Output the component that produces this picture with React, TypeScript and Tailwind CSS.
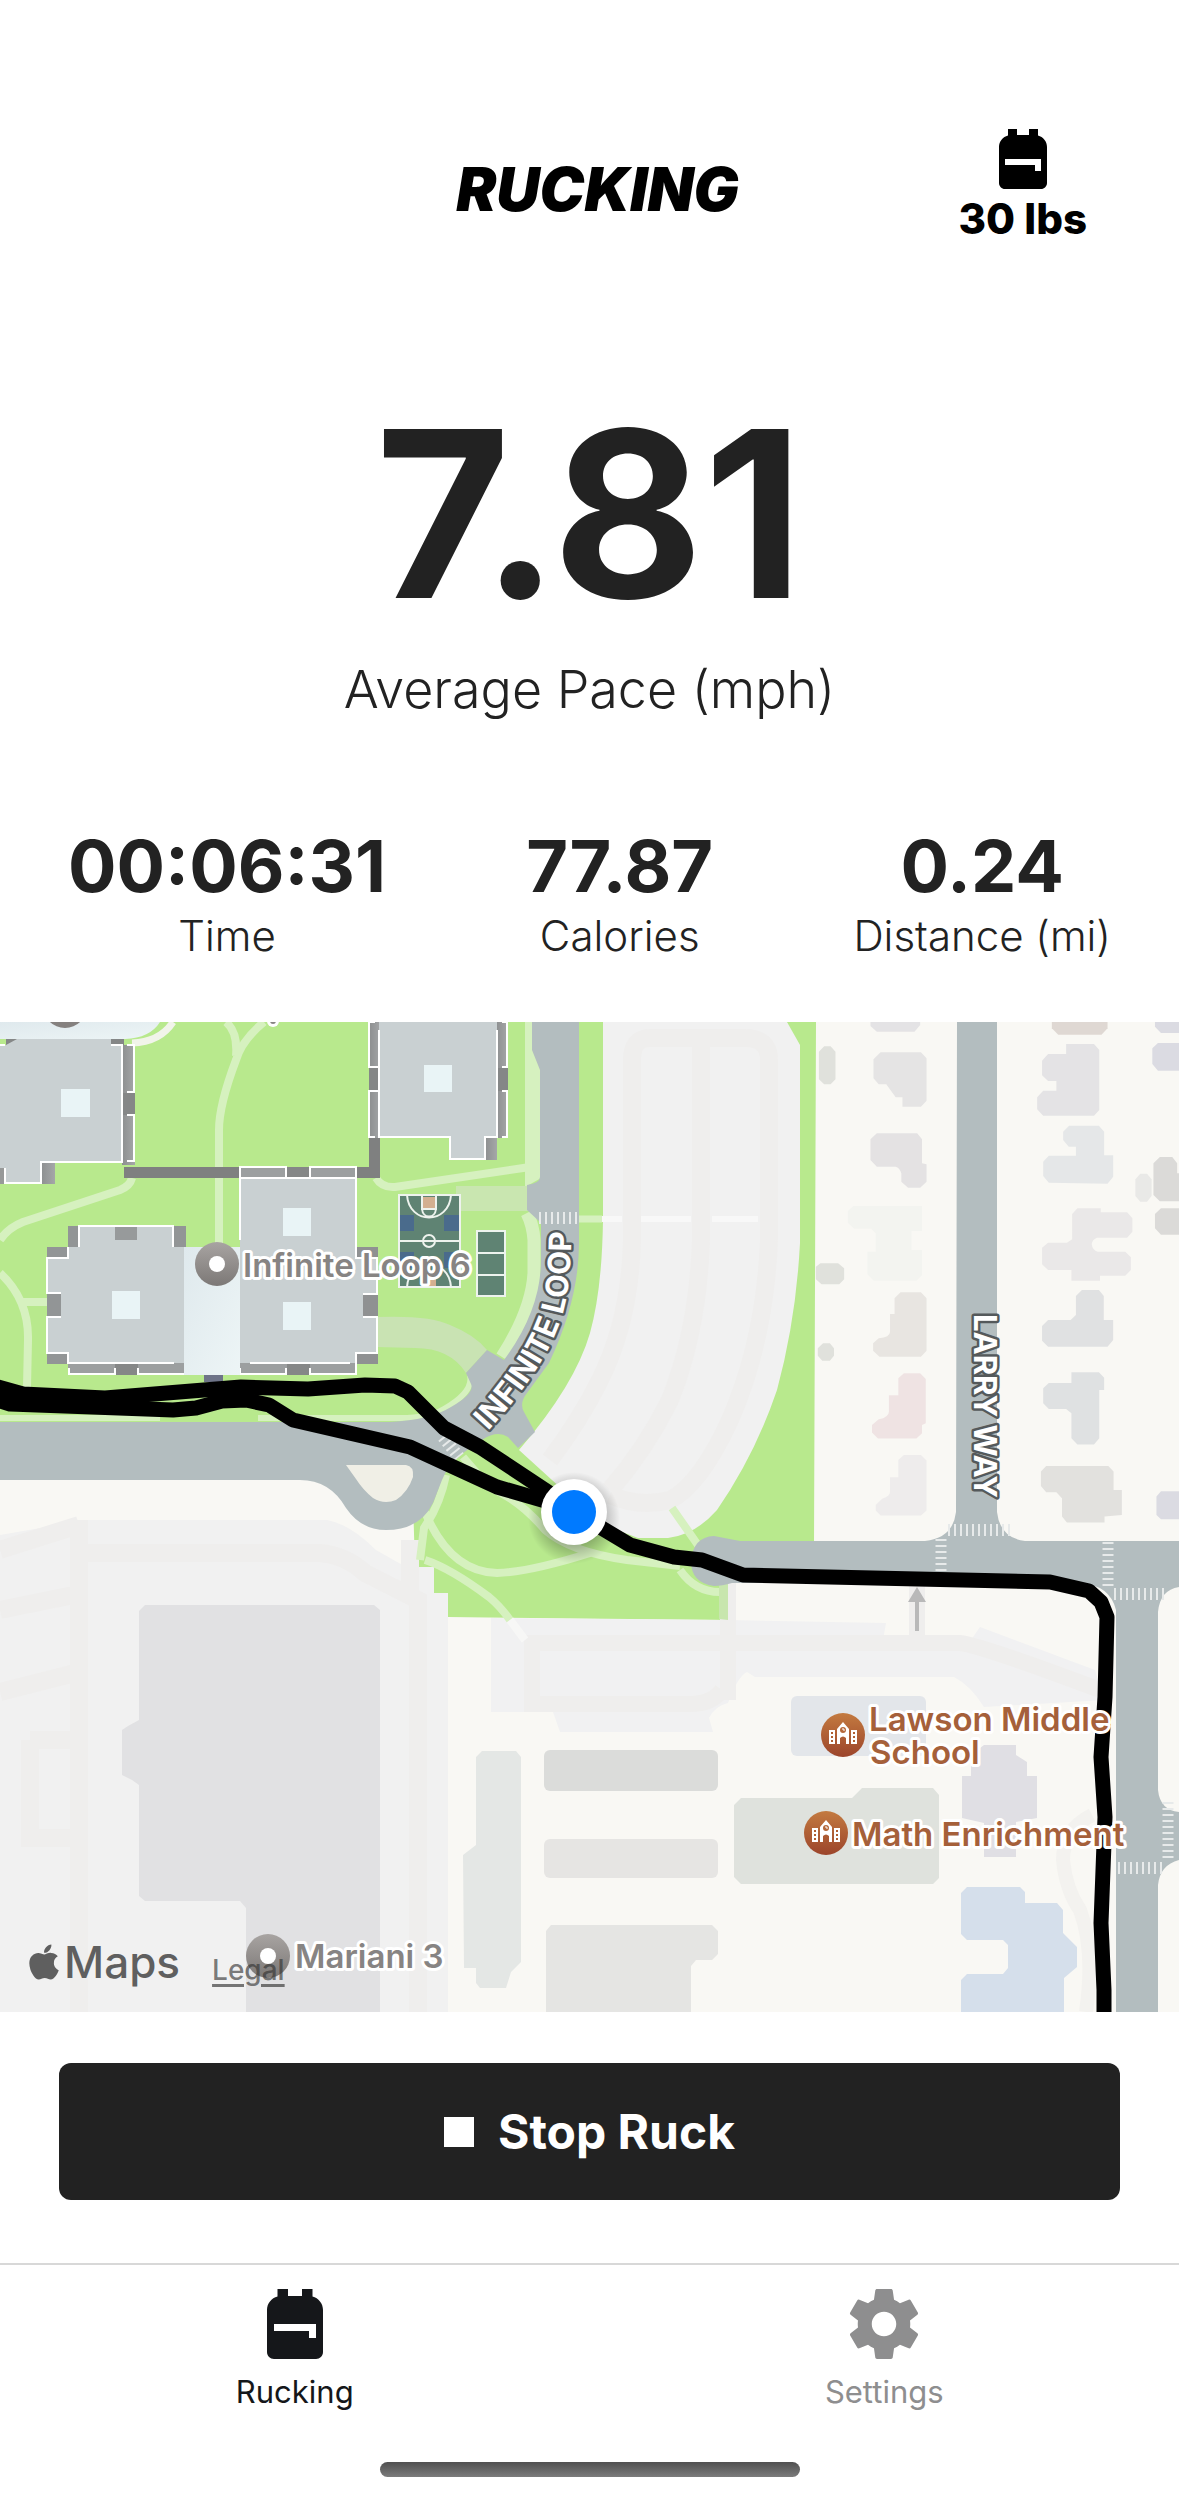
import React from "react";
import { MdBackpack } from "react-icons/md";
import { FaApple } from "react-icons/fa";

const stats = [
  { value: "00:06:31", label: "Time" },
  { value: "77.87", label: "Calories" },
  { value: "0.24", label: "Distance (mi)" },
];

function GearIcon({ className }: { className?: string }) {
  return (
    <svg viewBox="0 0 24 24" fill="currentColor" className={className} aria-hidden="true">
      <path d="M19.43 12.98c.04-.32.07-.64.07-.98s-.03-.66-.07-.98l2.11-1.65c.19-.15.24-.42.12-.64l-2-3.46c-.12-.22-.39-.3-.61-.22l-2.49 1c-.52-.4-1.08-.73-1.69-.98l-.38-2.65C14.46 2.18 14.25 2 14 2h-4c-.25 0-.46.18-.49.42l-.38 2.65c-.61.25-1.17.59-1.69.98l-2.49-1c-.23-.09-.49 0-.61.22l-2 3.46c-.13.22-.07.49.12.64l2.11 1.65c-.04.32-.07.65-.07.98s.03.66.07.98l-2.11 1.65c-.19.15-.24.42-.12.64l2 3.46c.12.22.39.3.61.22l2.49-1c.52.4 1.08.73 1.69.98l.38 2.65c.03.24.24.42.49.42h4c.25 0 .46-.18.49-.42l.38-2.65c.61-.25 1.17-.59 1.69-.98l2.49 1c.23.09.49 0 .61-.22l2-3.46c.12-.22.07-.49-.12-.64l-2.11-1.65zM12 15.5c-1.93 0-3.5-1.57-3.5-3.5s1.57-3.5 3.5-3.5 3.5 1.57 3.5 3.5-1.57 3.5-3.5 3.5z" />
    </svg>
  );
}

function Campus() {
  return (
    <g>
      {/* walking paths */}
      <g fill="none" stroke="#d6f1bf" strokeWidth="8">
        <path d="M226 1022Q238 1032 236 1056M264 1022Q242 1040 236 1060Q219 1105 219 1130V1250" />
        <path d="M132 1178Q130 1186 120 1190L23 1222Q8 1228 0 1240" />
        <path d="M0 1273Q29 1300 28 1340L27 1387M23 1302H50" />
        <path d="M376 1178Q382 1188 395 1187L530 1167" />
        <path d="M470 1375Q474 1392 444 1409Q430 1418 400 1418H258M160 1418H0" strokeWidth="6" />
        <path d="M425 1512Q450 1572 497 1573Q530 1572 590 1553" />
        <path d="M425 1560Q450 1568 489 1597Q500 1606 510 1620" />
        <path d="M463 1457L489 1487Q520 1500 545 1530Q570 1552 627 1560L680 1566" />
        <path d="M446 1475Q440 1505 424 1528L420 1560" />
        <path d="M672 1508L700 1548M680 1570Q695 1592 720 1592" />
      </g>
      <path d="M510 1620L525 1640" fill="none" stroke="#f7f7f6" strokeWidth="8" />
      <path d="M525 1022H534V1052L541 1070V1178L527 1186H525Z" fill="#d6f1bf" />
      <path d="M527 1213Q533 1225 534 1240V1273Q532 1310 502 1357" fill="none" stroke="#d6f1bf" strokeWidth="13" />
      <rect x="456" y="1186" width="72" height="25" fill="#c9e6b0" />
      <path d="M377 1317Q430 1315 450 1325Q475 1335 487 1350L466 1373Q450 1348 415 1348L377 1347Z" fill="#c9e3b3" />
      <path d="M719 1583H728V1620L719 1619Z" fill="#c8e6ae" />

      {/* covered walkways */}
      <path d="M124 1167H369V1138H380V1178H124Z" fill="#7f8080" />

      {/* north hall and its glass roof */}
      <path d="M173 1022Q160 1042 132 1043" fill="none" stroke="#f1f4ea" strokeWidth="7" />
      <path d="M0 1022H160Q150 1038 125 1039H0Z" fill="url(#glass)" />
      <circle cx="65" cy="1006" r="22" fill="#85817f" />
      <rect x="6" y="1039" width="11" height="6" fill="#858787" />
      <rect x="111" y="1039" width="13" height="7" fill="#858787" />
      <rect x="122" y="1045" width="13" height="120" fill="url(#shade)" />
      <rect x="122" y="1093" width="13" height="22" fill="#858787" />
      <rect x="41" y="1162" width="14" height="22" fill="url(#shade)" />
      <rect x="0" y="1168" width="6" height="16" fill="#979999" />
      <path d="M0 1045H6L17 1039H111V1045H122V1162H41V1183H5V1168H0Z" fill="#c9d0d2" />
      <path d="M0 1045H5M111 1045H122V1162H41V1183H5V1168M127 1045H134V1092H127M127 1115H134V1161H127" fill="none" stroke="#fff" strokeWidth="2" />
      <rect x="61" y="1089" width="29" height="28" fill="#e9f4f6" />

      {/* east hall */}
      <rect x="369" y="1022" width="12" height="116" fill="url(#shade)" />
      <rect x="369" y="1068" width="12" height="23" fill="#858787" />
      <rect x="496" y="1022" width="12" height="116" fill="url(#shade)" />
      <rect x="496" y="1068" width="12" height="23" fill="#858787" />
      <rect x="485" y="1138" width="12" height="22" fill="url(#shade)" />
      <path d="M379 1022H497V1137H485V1159H450V1137H379Z" fill="#c9d0d2" />
      <path d="M379 1030V1137H450V1159H485V1137H497V1030M375 1022H369V1067H378M378 1091H369V1137H375M502 1022H507V1067H502M502 1091H507V1137H502" fill="none" stroke="#fff" strokeWidth="2" />
      <rect x="424" y="1065" width="28" height="27" fill="#e9f4f6" />

      {/* centre hall */}
      <rect x="240" y="1167" width="116" height="12" fill="#9c9fa0" />
      <rect x="287" y="1167" width="23" height="12" fill="#858787" />
      <rect x="240" y="1363" width="116" height="12" fill="#9c9fa0" />
      <rect x="287" y="1363" width="23" height="12" fill="#858787" />
      <rect x="356" y="1247" width="22" height="117" fill="#8f9192" />
      <path d="M240 1178H356V1258H377V1294H363V1316H377V1353H356V1363H240Z" fill="#c9d0d2" />
      <path d="M240 1240V1178H356V1258H377V1294H363M363 1317H377V1353H356V1374H310V1368M240 1368V1374H286V1368M240 1178V1167H286V1177M310 1177V1167H356V1178M250 1363H350" fill="none" stroke="#fff" strokeWidth="2" />
      <rect x="283" y="1208" width="28" height="28" fill="#e9f4f6" />
      <rect x="283" y="1302" width="28" height="28" fill="#e9f4f6" />

      {/* west hall */}
      <rect x="68" y="1226" width="118" height="22" fill="#929596" />
      <rect x="47" y="1247" width="22" height="117" fill="#929596" />
      <rect x="68" y="1363" width="116" height="12" fill="#9c9fa0" />
      <rect x="115" y="1363" width="23" height="12" fill="#858787" />
      <path d="M79 1226H173V1247H184V1363H68V1353H47V1317H61V1293H47V1258H68V1247H79Z" fill="#c9d0d2" />
      <rect x="115" y="1226" width="22" height="14" fill="#979a9b" />
      <path d="M79 1247V1226H173V1247M68 1247V1258H47V1293H61M61 1317H47V1353H68V1363H174M69 1368V1374H115V1368M138 1368V1374H184" fill="none" stroke="#fff" strokeWidth="2" />
      <rect x="112" y="1291" width="28" height="28" fill="#e9f4f6" />
      <rect x="184" y="1247" width="56" height="128" fill="url(#glass)" />
      <rect x="204" y="1375" width="19" height="7" fill="#6e7488" />

      {/* sports courts */}
      <rect x="399" y="1195" width="61" height="92" fill="#5f8373" />
      <path d="M400 1215h14v16h-14zM444 1215h15v16h-15zM400 1252h14v16h-14zM444 1252h15v16h-15z" fill="#4a6b8c" />
      <path d="M422 1197h14v12h-14zM422 1276h14v10h-14z" fill="#d3af90" />
      <g fill="none" stroke="#eef3ee" strokeWidth="2">
        <rect x="399" y="1195" width="61" height="92" />
        <path d="M399 1241H460M407 1195C409 1225 449 1225 451 1195M407 1287C409 1257 449 1257 451 1287M422 1195V1209H436V1195M422 1209C423 1219 435 1219 436 1209" />
        <circle cx="429" cy="1241" r="6" />
      </g>
      <rect x="477" y="1231" width="28" height="65" fill="#5f8373" stroke="#eef3ee" strokeWidth="2" />
      <path d="M477 1253H505M477 1275H505" stroke="#eef3ee" strokeWidth="2" />
    </g>
  );
}

function Parking() {
  return (
    <g>
      <path d="M603 1022H787L800 1045V1243Q796 1320 777 1390Q755 1455 717 1510Q695 1535 668 1538H638Q600 1525 574 1500L519 1450Q575 1385 590 1333Q602 1290 603 1220Z" fill="#f1f1f1" />
      <g fill="none" stroke="#efeeed" strokeWidth="18">
        <path d="M769 1240V1060Q769 1038 745 1038H650Q632 1038 632 1060V1240Q630 1320 600 1380Q580 1420 550 1460" />
        <path d="M701 1036V1240Q698 1330 670 1400Q645 1450 610 1490" />
        <path d="M769 1240Q765 1340 730 1420Q700 1485 670 1500Q640 1508 610 1495" />
      </g>
      <path d="M579 1219H622M641 1219H691M712 1219H758" stroke="#f8f8f8" strokeWidth="6" />
      <path d="M579 1219H602" stroke="#d6f1bf" strokeWidth="7" />

      {/* south-west lot */}
      <path d="M0 1535L87 1520H327Q350 1524 376 1550L406 1567H434V1593H448V2012H0Z" fill="#f1f1f1" />
      <g fill="none" stroke="#efeeed" strokeWidth="18">
        <path d="M79 1520V2012M0 1550L79 1525M0 1610L79 1594M0 1692L79 1672M88 1553H320Q345 1555 365 1573L418 1600V2012M410 1540V1600" />
        <path d="M30 1740H70M30 1740V1838H70" />
      </g>
      <path d="M145 1605H374L380 1610V2012H246V1908L240 1901H145L139 1896V1785L132 1780L122 1775V1730L128 1726L139 1720V1611Z" fill="#e1e1e3" />

      {/* school lot */}
      <path d="M491 1618L728 1620L886 1623L883 1640H971L980 1627L1095 1670L1104 1700L984 1707Q970 1685 954 1677H755L747 1672Q738 1676 728 1703Q715 1706 709 1718L713 1732H560L553 1712H491Z" fill="#f1f1f2" />
      <path d="M728 1583V1700M917 1585V1640M532 1712V1643H960Q980 1645 1100 1690M532 1704H690Q712 1704 722 1690" fill="none" stroke="#efeeed" strokeWidth="16" />
      <path d="M1092 1815Q1063 1830 1063 1860Q1066 1890 1080 1910Q1095 1950 1086 2012" fill="none" stroke="#f3f2ef" strokeWidth="14" />
      <path d="M915 1631V1602H908L917 1587L926 1602H919V1631Z" fill="#b9b9b9" />
    </g>
  );
}

function Roads() {
  return (
    <g>
      <g fill="#b3bdbf">
        <path d="M532 1022H579V1243Q579 1300 549 1363L527 1393Q519 1403 524 1412L535 1432L518 1448L508 1437Q497 1430 482 1440L463 1453Q448 1465 442 1480L433 1503Q420 1530 386 1530Q361 1530 346 1508Q330 1480 300 1480H0V1422H390Q430 1420 451 1407Q475 1393 471 1384L466 1373L487 1350L504 1360Q541 1310 541 1260V1223L527 1210V1185Q540 1183 540 1177V1070L532 1050Z" />
        <path d="M957 1022H997V1512Q1000 1538 1025 1541H1179V1587Q1160 1590 1158 1612V1790Q1160 1810 1179 1812V1860Q1160 1865 1158 1885V2012H1116V1610Q1110 1585 1080 1583L732 1583Q722 1586 714 1586Q691 1583 691 1561Q693 1537 714 1536L740 1541H925Q953 1538 956 1512Z" />
      </g>
      <path d="M346 1465H406Q414 1466 413 1477Q408 1492 396 1500Q384 1505 373 1498Q363 1490 356 1479Z" fill="#f0efe6" />
      <g fill="none" stroke="#e7eaea" strokeDasharray="2 4">
        <path d="M539 1218H578" strokeWidth="12" />
        <path d="M443 1437L459 1457" strokeWidth="12" />
        <path d="M948 1530H1012" strokeWidth="12" />
        <path d="M941 1539V1572" strokeWidth="11" />
        <path d="M1108 1542V1590" strokeWidth="11" />
        <path d="M1114 1594H1168" strokeWidth="12" />
        <path d="M1118 1868H1162" strokeWidth="12" />
        <path d="M1168 1802V1862" strokeWidth="11" />
      </g>
    </g>
  );
}

function Houses() {
  return (
    <g>
      {/* drawn on a finer grid than the rest of the map */}
      <g transform="translate(589 1010) scale(0.3763 0.3333)">
        <path d="M748 35H880V45L865 65H765L748 48Z" fill="#e4e3e5" />
        <path d="M611 125L625 109H642L655 125V208L642 223H625L611 208ZM603 770L615 760H662L678 775V808L665 823H618L603 808ZM608 1015L622 1000H640L651 1015V1037L640 1052H620L608 1037Z" fill="#e0e1dc" />
        <path d="M756 148L775 127H882L897 145V272L882 290H833V262H815L790 223H770L756 205Z" fill="#e5e4e4" />
        <path d="M748 388L765 370H872L885 388V460L897 463V515L880 533H848L830 515V490Q825 472 815 470H765L748 450Z" fill="#e4e2e3" />
        <path d="M688 603L703 588H885V663H857V720H885V795L870 812H757L740 793V725H762V670L750 656H705L688 638Z" fill="#f3f4f0" />
        <path d="M812 865L828 847H882L897 865V1022L882 1040H772L755 1022V1000L770 985Q800 982 800 965V912H812Z" fill="#e8e5e1" />
        <path d="M822 1105L837 1090H880L895 1107V1240L885 1245V1270L870 1286H768L752 1268V1245L770 1228Q797 1222 797 1205V1156H822Z" fill="#efe3e3" />
        <path d="M822 1350L837 1335H882L897 1352V1502L882 1517H775L762 1502V1485L780 1466Q800 1460 800 1445V1402H822Z" fill="#eeecec" />
        <path d="M1230 35H1378V55L1362 74H1247L1230 55Z" fill="#dfd8d3" />
        <path d="M1268 102H1342L1356 120V300L1342 317H1207L1191 298V262L1207 242H1242V213H1220L1204 196V152L1220 132H1268Z" fill="#e4e3e5" />
        <path d="M1260 365L1276 347H1355L1369 365V436H1393V500L1378 521L1222 518L1207 498V455L1222 437H1294V410H1275L1260 390Z" fill="#e5e7e8" />
        <path d="M1284 612L1298 595H1360V607H1430L1444 625V665L1430 683H1350Q1336 690 1336 703Q1338 722 1352 725H1425L1440 742V780L1425 797H1358V812H1282V780H1220L1204 763V713L1220 698H1270L1284 688Z" fill="#eae8e8" />
        <path d="M1294 858L1310 840H1355L1368 858V930H1393V990L1378 1010H1220L1204 992V948L1220 930H1280L1294 915Z" fill="#e0e1e2" />
        <path d="M1282 1087H1355L1369 1103V1140H1356V1285L1342 1304H1298L1282 1285V1210L1268 1197H1222L1207 1180V1135L1222 1119H1282Z" fill="#dfe1e2" />
        <path d="M1201 1385L1215 1368H1380L1394 1385V1440H1416V1515L1370 1520V1538H1270L1257 1520V1465L1242 1447H1215L1201 1428Z" fill="#e2e1de" />
        <path d="M1504 35H1568V69H1520L1504 50ZM1497 115L1512 99H1568V182H1512L1497 162ZM1508 1460L1520 1444H1568V1528H1520L1508 1515Z" fill="#dbdbe2" />
        <path d="M1500 460L1517 441H1550L1563 460V490H1568V574H1517L1500 555ZM1504 612L1520 595H1568V674H1520L1504 655Z" fill="#dbdad8" />
        <path d="M1452 508L1465 491H1483L1495 508V558L1483 575H1465L1452 558Z" fill="#e9e9e7" />
      </g>
      {/* school buildings */}
      <path d="M482 1751H516L521 1757V1962L511 1972L506 1988H480L476 1983V1968H464L463 1855L476 1845V1757Z" fill="#e4e7e5" />
      <rect x="544" y="1750" width="174" height="41" rx="6" fill="#dbdcda" />
      <rect x="544" y="1839" width="174" height="39" rx="6" fill="#e6e5e3" />
      <path d="M551 1925H712L718 1931V1954L712 1960H696L691 1966V2012H546V1931Z" fill="#e5e5e3" />
      <rect x="791" y="1696" width="135" height="60" rx="6" fill="#e3e6ea" />
      <path d="M741 1798H852L862 1788H933L939 1795V1878L933 1884H741L734 1877V1805Z" fill="#dfe2dd" />
      <path d="M984 1745H1016V1755L1027 1762V1776H1037V1818L1016 1822V1857H984V1823L962 1818V1776H971V1755Z" fill="#e0dfe4" />
      <path d="M967 1887H1020L1025 1892V1903H1057L1063 1910V1933L1077 1947V1967L1064 1978V2012H961V1980L967 1974H1003L1008 1968V1945L1003 1940H967L961 1934V1893Z" fill="#d5dfeb" />
    </g>
  );
}

function SchoolPin({ x, y }: { x: number; y: number }) {
  return (
    <g transform={`translate(${x} ${y})`}>
      <circle r="22" fill="url(#school)" />
      <path d="M-14 -5H-8V9H-14ZM8 -5H14V9H8ZM-6 9V-6L0 -13L6 -6V9H3V3Q0 0 -3 3V9Z" fill="#fff" />
      <circle cx="0" cy="-5" r="3" fill="#b5683a" />
      <path d="M-12 -3h2v2h-2zM-12 1h2v2h-2zM-12 5h2v2h-2zM10 -3h2v2h-2zM10 1h2v2h-2zM10 5h2v2h-2z" fill="#b05f32" />
      <path d="M0 -7V-5H2" fill="none" stroke="#fff" />
    </g>
  );
}

function RouteMap() {
  return (
    <svg viewBox="0 1022 1179 990" className="block h-auto w-full" role="img" aria-label="Map of the current ruck">
      <defs>
        <linearGradient id="glass" x1="0" y1="0" x2="1" y2="1">
          <stop offset="0" stopColor="#dfe9ed" />
          <stop offset="1" stopColor="#edf5f6" />
        </linearGradient>
        <linearGradient id="shade" x1="0" y1="0" x2="1" y2="0">
          <stop offset="0" stopColor="#8d8f90" />
          <stop offset="1" stopColor="#a5a7a8" />
        </linearGradient>
        <linearGradient id="pin" x1="0" y1="0" x2="0" y2="1">
          <stop offset="0" stopColor="#a8a4a2" />
          <stop offset="1" stopColor="#7c7876" />
        </linearGradient>
        <linearGradient id="school" x1="0" y1="0" x2="0" y2="1">
          <stop offset="0" stopColor="#c37a40" />
          <stop offset="1" stopColor="#9c452b" />
        </linearGradient>
        <radialGradient id="halo">
          <stop offset="0.6" stopColor="#000" stopOpacity="0.25" />
          <stop offset="1" stopColor="#000" stopOpacity="0" />
        </radialGradient>
      </defs>

      <rect x="0" y="1022" width="1179" height="990" fill="#f9f8f4" />
      <path d="M0 1022H816L814 1545H728V1620L448 1617V1593H434V1567H415L413 1500L440 1440H0Z" fill="#b8e98d" />
      <Parking />
      <Campus />
      <Roads />
      <Houses />

      <g fill="none" stroke="#000" strokeWidth="15" strokeLinejoin="round">
        <path d="M-6 1386L23 1394L105 1398L241 1387L308 1389L365 1385L395 1386L408 1392L444 1428L480 1447L545 1490L574 1510L600 1527L630 1545L674 1557L702 1560L743 1575L1050 1582L1089 1591L1101 1602L1107 1617L1105 1697L1101 1757L1105 1817L1101 1923L1104 1990V2020" />
        <path d="M-6 1399L10 1404L173 1410L196 1408L222 1401L246 1400L269 1405L293 1420L410 1447L497 1487L549 1502L574 1512" />
        <path d="M0 1393L30 1400H140" />
      </g>

      <circle cx="574" cy="1518" r="46" fill="url(#halo)" />
      <circle cx="574" cy="1512" r="33" fill="#fff" />
      <circle cx="574" cy="1512" r="22" fill="#007aff" />

      <circle cx="217" cy="1264" r="22" fill="url(#pin)" />
      <circle cx="217" cy="1264" r="8" fill="#fff" />
      <circle cx="268" cy="1956" r="22" fill="url(#pin)" />
      <circle cx="268" cy="1956" r="8" fill="#fff" />
      <SchoolPin x={843} y={1735} />
      <SchoolPin x={826} y={1833} />
      <circle cx="273" cy="1021" r="6" fill="#fff" />
      <circle cx="273" cy="1021" r="3" fill="#878483" />

      <g fontSize="33" fontWeight="600" fill="#878483" stroke="#fff" strokeWidth="6" strokeLinejoin="round" paintOrder="stroke">
        <text x="243" y="1277">Infinite Loop 6</text>
        <text x="295" y="1968">Mariani 3</text>
        <g fill="#a5603a">
          <text x="869" y="1731">Lawson Middle</text>
          <text x="870" y="1764">School</text>
          <text x="852" y="1846">Math Enrichment</text>
        </g>
      </g>

      <path id="loop-label" d="M488 1431Q553 1360 565 1305Q573 1270 571 1200" fill="none" />
      <g fontSize="31" fontWeight="700" fill="#fff" stroke="#54595b" strokeWidth="5" strokeLinejoin="round" paintOrder="stroke">
        <text>
          <textPath href="#loop-label">INFINITE LOOP</textPath>
        </text>
        <text transform="translate(974 1314) rotate(90)">LARRY WAY</text>
      </g>
    </svg>
  );
}

export default function App() {
  return (
    <div className="flex min-h-screen flex-col bg-white font-['Inter',sans-serif] text-[#222222]">
      <header className="grid grid-cols-[1fr_auto_1fr] items-center pt-[123px] pr-[92px] pl-[108px] text-black">
        <span />
        <h1 className="pt-3 text-[60px] leading-[64px] font-black italic">RUCKING</h1>
        <button type="button" className="flex flex-col items-center justify-self-end">
          <MdBackpack className="size-[72px]" aria-hidden="true" />
          <span className="text-[42px] leading-[48px] font-extrabold">30 lbs</span>
        </button>
      </header>

      <main className="flex flex-col">
        <section className="mt-[155px] flex flex-col items-center gap-7" aria-label="Average pace">
          <p className="text-[232px] leading-[232px] font-bold">7.81</p>
          <p className="text-[52px] leading-[64px] font-light">Average Pace (mph)</p>
        </section>

        <section className="mt-[104px] flex justify-between px-[68px]" aria-label="Statistics">
          {stats.map((s) => (
            <div key={s.label} className="flex flex-col items-center gap-1">
              <span className="text-[72px] leading-[80px] font-bold">{s.value}</span>
              <span className="text-[42px] leading-[52px] font-light">{s.label}</span>
            </div>
          ))}
        </section>

        <section className="relative mt-[60px]" aria-label="Route">
          <RouteMap />
          <div className="absolute bottom-6 left-6 flex items-end gap-8 text-[#5f5f5f]">
            <span className="flex items-center text-[44px] leading-[52px] font-medium">
              <FaApple className="size-10" aria-hidden="true" />
              Maps
            </span>
            <a href="#legal" className="text-[28px] leading-[36px] font-medium text-[#333333]/65 underline decoration-3 underline-offset-4">
              Legal
            </a>
          </div>
        </section>

        <div className="px-[59px] pt-[51px] pb-[63px]">
          <button type="button" className="flex h-[137px] w-full items-center justify-center gap-6 rounded-xl bg-[#222222] text-white">
            <span className="size-[30px] bg-white" />
            <span className="text-[48px] leading-[56px] font-bold">Stop Ruck</span>
          </button>
        </div>
      </main>

      <nav className="grid grid-cols-2 border-t-2 border-[#d8d8d8] pt-[17px] text-[31px] leading-[36px]">
        <a href="#rucking" aria-current="page" className="flex flex-col items-center gap-2 text-[#15171a]">
          <MdBackpack className="size-[84px]" aria-hidden="true" />
          Rucking
        </a>
        <a href="#settings" className="flex flex-col items-center gap-2 text-[#8e8e8f]">
          <GearIcon className="size-[84px]" />
          Settings
        </a>
      </nav>

      <div className="mt-[52px] mb-6 h-[15px] w-[420px] self-center rounded-full bg-linear-to-b from-[#505050] to-[#7c7c7c]" />
    </div>
  );
}
